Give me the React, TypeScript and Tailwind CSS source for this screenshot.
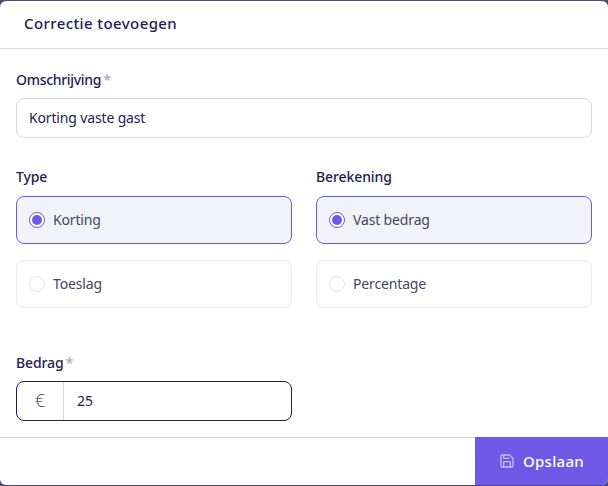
import { Save } from "lucide-react";

function Radio({ label, active }: { label: string; active?: boolean }) {
  return (
    <div className={active ? "flex h-[48px] items-center gap-2 rounded-lg border border-[#7058e6] bg-[#f2f2fb] px-[12px]" : "flex h-[48px] items-center gap-2 rounded-lg border border-[#ebebef] bg-white px-[12px]"}>
      {active ? (
        <span className="flex h-4 w-4 items-center justify-center rounded-full border border-[#7058e6] bg-white">
          <span className="h-2.5 w-2.5 rounded-full bg-[#7058e6]" />
        </span>
      ) : (
        <span className="h-4 w-4 rounded-full border border-[#e3e3e8] bg-white" />
      )}
      <span className="pb-0.5 text-[14px] tracking-[-0.15px] text-[#44465f]">{label}</span>
    </div>
  );
}

export default function App() {
  return (
    <div className="h-[486px] w-[608px] bg-[#4a4b6e] py-px">
      <div className="flex h-[484px] flex-col overflow-hidden rounded-[6px] bg-white font-['Noto_Sans',sans-serif] text-[#1f2150]">
        <div className="flex h-[48px] items-center border-b border-[#d9d9dc] px-6 pb-0.5 text-[15px] font-medium tracking-[0.4px]">Correctie toevoegen</div>
        <div className="flex flex-1 flex-col px-4 pt-[21px]">
          <div className="text-[14px] font-medium leading-5 tracking-[-0.3px]">Omschrijving<span className="ml-0.5 text-[#a9a9b6]">*</span></div>
          <div className="mt-[8px] flex h-10 items-center rounded-lg border border-[#d9d9dc] px-3 pb-0.5 text-[14px] tracking-[-0.15px]">Korting vaste gast</div>
          <div className="mt-[29px] grid grid-cols-2 gap-6">
            <div className="flex flex-col">
              <div className="mb-[9px] text-[14px] font-medium leading-5 tracking-[-0.1px]">Type</div>
              <div className="flex flex-col gap-4"><Radio label="Korting" active /><Radio label="Toeslag" /></div>
            </div>
            <div className="flex flex-col">
              <div className="mb-[9px] text-[14px] font-medium leading-5 tracking-[-0.1px]">Berekening</div>
              <div className="flex flex-col gap-4"><Radio label="Vast bedrag" active /><Radio label="Percentage" /></div>
            </div>
          </div>
          <div className="mt-[45px] text-[14px] font-medium leading-5 tracking-[-0.1px]">Bedrag<span className="ml-0.5 text-[#a9a9b6]">*</span></div>
          <div className="mt-[8px] flex h-10 w-[276px] items-center rounded-lg border border-[#1f2150] text-[14px]">
            <div className="flex h-full w-[47px] items-center justify-center border-r border-[#d9d9dc] pb-0.5 text-[18px] font-extralight">€</div>
            <div className="pb-0.5 pl-[13px]">25</div>
          </div>
        </div>
        <div className="flex h-[48px] justify-end border-t border-[#d9d9dc]">
          <div className="-mt-px flex w-[133px] items-center justify-center gap-2 bg-[#7058e6] text-[15px] font-medium tracking-[0.3px] text-white">
            <Save size={16} className="text-[#c6bcf5]" />Opslaan
          </div>
        </div>
      </div>
    </div>
  );
}
